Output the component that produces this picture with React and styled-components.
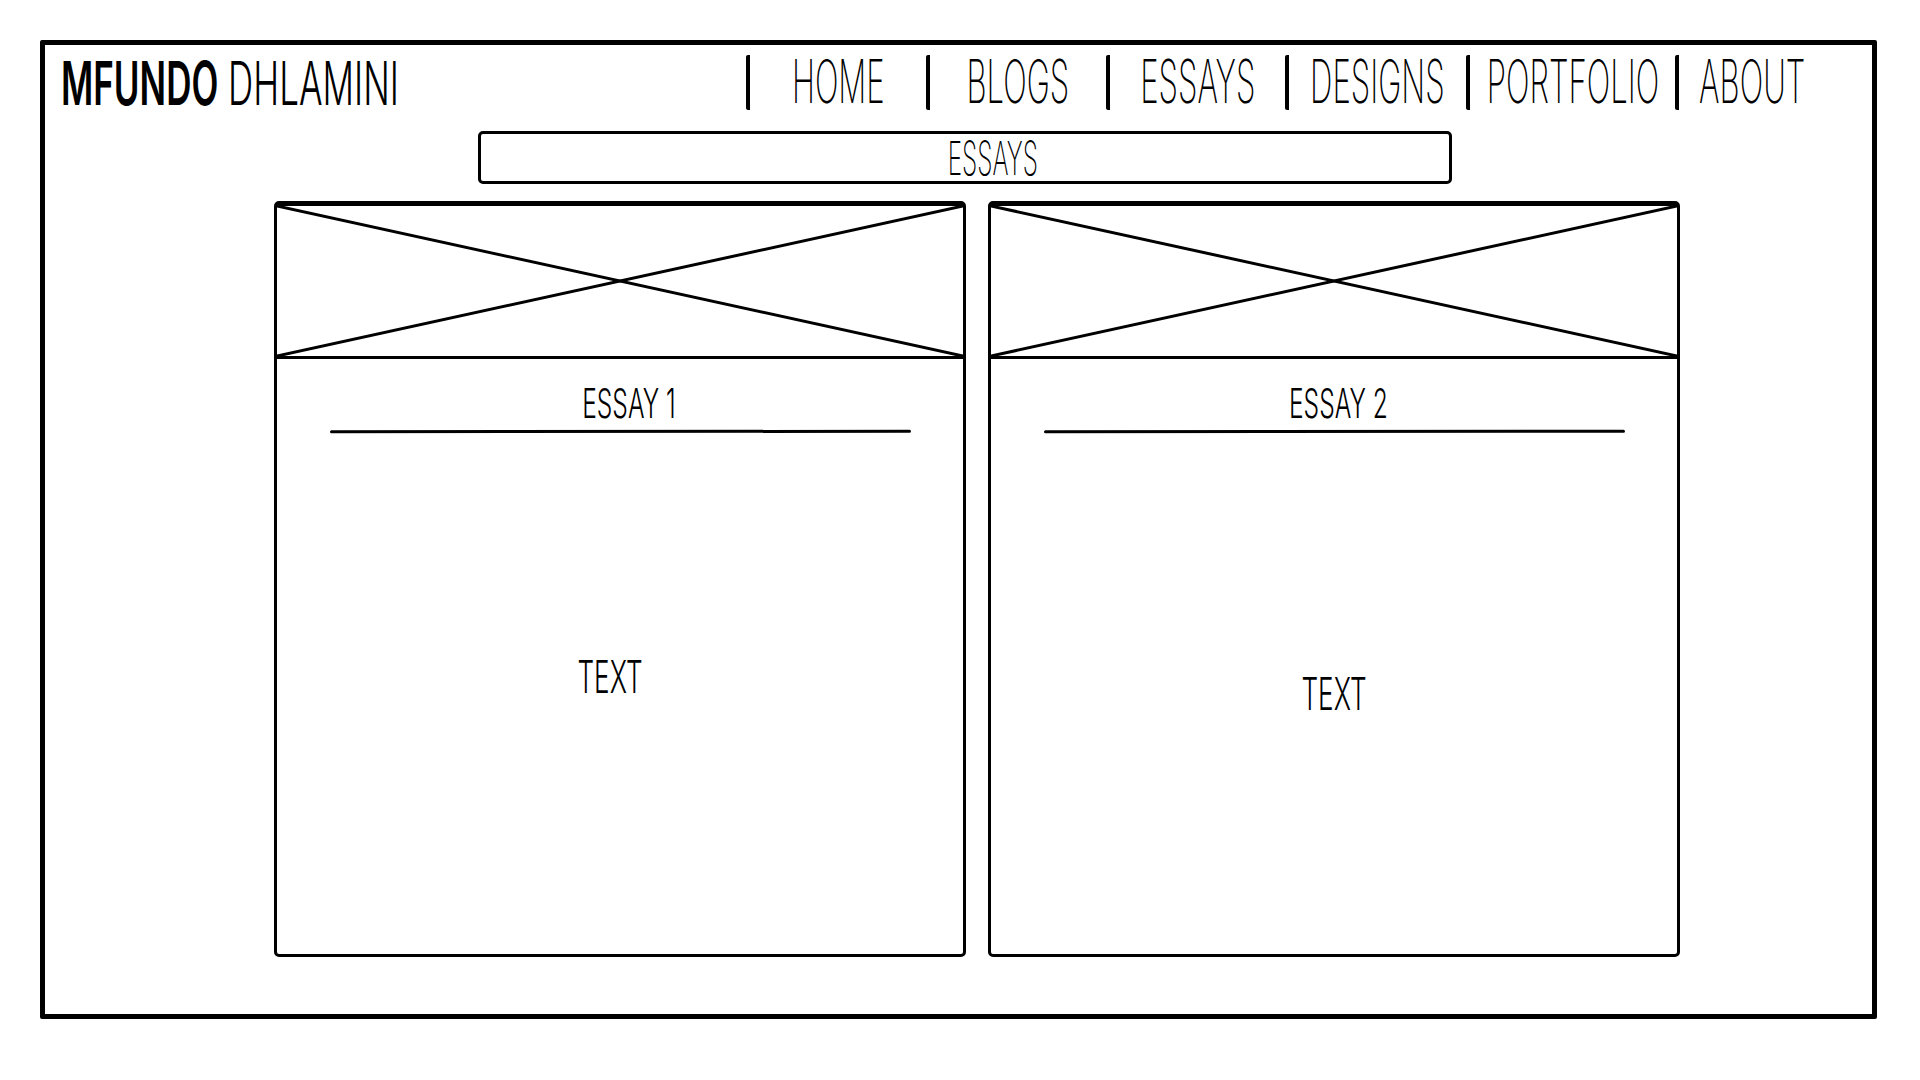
import React from 'react';
import styled, { createGlobalStyle } from 'styled-components';

const GlobalStyle = createGlobalStyle`
  html, body {
    margin: 0;
    padding: 0;
    background: #fff;
  }
  body {
    font-family: Inter, "Liberation Sans", sans-serif;
    color: #000;
  }
  * {
    box-sizing: border-box;
  }
`;

const Page = styled.div`
  width: 1920px;
  height: 1080px;
  padding: 40px 0 0 40px;
`;

const Frame = styled.div`
  display: flex;
  flex-direction: column;
  width: 1837px;
  height: 979px;
  border: 5px solid #000;
  border-radius: 2px;
`;

const Header = styled.header`
  display: flex;
  flex-direction: row;
  justify-content: space-between;
  align-items: flex-start;
  height: 65px;
  padding: 10px 47px 0 16px;
`;

// sketch lettering is very narrow, so squeeze a normal face sideways
const Squeeze = styled.span`
  display: inline-block;
  white-space: nowrap;
  transform: scaleX(${props => props.$sx || 0.52});
  transform-origin: ${props => props.$origin || 'center'};
`;

const Logo = styled.div`
  font-size: 60px;
  line-height: 1;
  font-weight: 300;
  margin-top: -2px;

  b {
    font-weight: 600;
  }
`;

const Nav = styled.nav`
  display: flex;
  flex-direction: row;
  height: 55px;
`;

const NavItem = styled.a`
  display: flex;
  justify-content: center;
  align-items: center;
  width: ${props => props.$w}px;
  height: 55px;
  padding-bottom: 4px;
  border-left: 4px solid #000;
  border-radius: 2px;
  font-size: 60px;
  line-height: 1;
  font-weight: 200;
  color: #000;
  text-decoration: none;
`;

const SectionBar = styled.div`
  display: flex;
  justify-content: center;
  align-items: center;
  width: 974px;
  height: 53px;
  margin: 21px 0 0 433px;
  padding-left: 56px;
  border: 3px solid #000;
  border-radius: 5px;
  font-size: 47px;
  line-height: 1;
  font-weight: 200;
`;

const CardRow = styled.div`
  display: flex;
  flex-direction: row;
  gap: 22px;
  margin: 17px 0 0 229px;
`;

const Card = styled.article`
  display: flex;
  flex-direction: column;
  width: 692px;
  height: 756px;
  border: 3px solid #000;
  border-top-width: 5px;
  border-radius: 5px;
  overflow: hidden;
`;

const Placeholder = styled.div`
  height: 153px;
  border-bottom: 3px solid #000;

  svg {
    display: block;
    width: 100%;
    height: 100%;
  }
`;

const CardBody = styled.div`
  display: flex;
  flex-direction: column;
  align-items: center;
  flex: 1;
  padding-top: 24px;
`;

const CardTitle = styled.h2`
  margin: 0 0 0 ${props => props.$shift || 0}px;
  font-size: 41px;
  line-height: 1;
  font-weight: 300;
`;

const Rule = styled.div`
  width: 581px;
  height: 3px;
  margin-top: 6px;
  background: #000;
  border-radius: 2px;
  transform: rotate(-0.05deg);
`;

const BodyText = styled.p`
  margin: ${props => props.$top}px 0 0 ${props => props.$shift || 0}px;
  font-size: 45px;
  line-height: 1;
  font-weight: 300;
`;

const navLinks = [
  { label: 'HOME', w: 180 },
  { label: 'BLOGS', w: 180 },
  { label: 'ESSAYS', w: 179 },
  { label: 'DESIGNS', w: 181 },
  { label: 'PORTFOLIO', w: 209 },
  { label: 'ABOUT', w: 150 },
];

const essays = [
  { title: 'ESSAY 1', titleShift: 18, top: 221, shift: -20 },
  { title: 'ESSAY 2', titleShift: 8, top: 238, shift: 0 },
];

const CrossedImage = () => (
  <Placeholder>
    <svg viewBox="0 0 100 100" preserveAspectRatio="none">
      <line x1="0" y1="0" x2="100" y2="100" stroke="#000" strokeWidth="3" vectorEffect="non-scaling-stroke" />
      <line x1="100" y1="0" x2="0" y2="100" stroke="#000" strokeWidth="3" vectorEffect="non-scaling-stroke" />
    </svg>
  </Placeholder>
);

const App = () => {
  return (
    <>
      <GlobalStyle />
      <Page>
        <Frame>
          <Header>
            <Logo>
              <Squeeze $sx={0.583} $origin="left">
                <b>MFUNDO</b> DHLAMINI
              </Squeeze>
            </Logo>
            <Nav>
              {navLinks.map(link => (
                <NavItem key={link.label} href="#" $w={link.w}>
                  <Squeeze>{link.label}</Squeeze>
                </NavItem>
              ))}
            </Nav>
          </Header>

          <SectionBar>
            <Squeeze>ESSAYS</Squeeze>
          </SectionBar>

          <CardRow>
            {essays.map(essay => (
              <Card key={essay.title}>
                <CrossedImage />
                <CardBody>
                  <CardTitle $shift={essay.titleShift}>
                    <Squeeze $sx={0.6}>{essay.title}</Squeeze>
                  </CardTitle>
                  <Rule />
                  <BodyText $top={essay.top} $shift={essay.shift}>
                    <Squeeze $sx={0.58}>TEXT</Squeeze>
                  </BodyText>
                </CardBody>
              </Card>
            ))}
          </CardRow>
        </Frame>
      </Page>
    </>
  );
};

export default App;
